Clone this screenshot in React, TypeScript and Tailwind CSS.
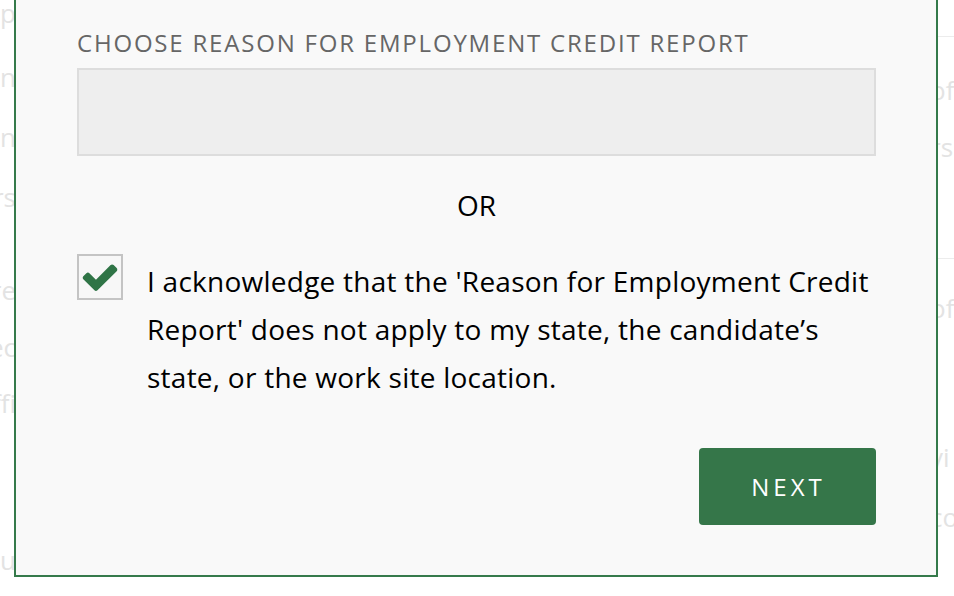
const faint = "text-[26px] leading-[30px] text-[#e3e3e3] whitespace-nowrap";

function CheckIcon() {
  return (
    <svg viewBox="0 0 1792 1792" className="w-[40px] h-[40px]" fill="#2f7446">
      <path d="M1671 566q0 40-28 68l-724 724-136 136q-28 28-68 28t-68-28l-136-136-362-362q-28-28-28-68t28-68l136-136q28-28 68-28t68 28l294 295 656-657q28-28 68-28t68 28l136 136q28 28 28 68z" />
    </svg>
  );
}

function Background() {
  return (
    <div className="flex h-[596px] bg-white overflow-hidden" style={{ fontFamily: '"Open Sans", sans-serif' }}>
      <div className="w-[16px] overflow-hidden flex flex-col items-end">
        <div className={`${faint} mt-[-2px]`}>Inp</div>
        <div className={`${faint} mt-[34px]`}>Main</div>
        <div className={`${faint} mt-[30px]`}>Plan</div>
        <div className={`${faint} mt-[30px]`}>Users</div>
        <div className={`${faint} mt-[63px]`}>Share</div>
        <div className={`${faint} mt-[27px]`}>Rec</div>
        <div className={`${faint} mt-[26px]`}>Offi</div>
        <div className={`${faint} mt-[127px]`}>Adju</div>
      </div>
      <div className="flex-1" />
      <div className="w-[24px] overflow-hidden">
        <div className="h-[36px]" />
        <div className="border-t border-[#ececec]" />
        <div className={`${faint} mt-[38px]`}>of</div>
        <div className={`${faint} mt-[27px]`}>rs</div>
        <div className="mt-[96px] border-t border-[#ececec]" />
        <div className={`${faint} mt-[34px]`}>of</div>
        <div className={`${faint} mt-[119px]`}>vi</div>
        <div className={`${faint} mt-[30px]`}>co</div>
      </div>
    </div>
  );
}

export default function App() {
  return (
    <div className="relative w-[954px] h-[596px] overflow-hidden">
      <Background />
      <div
        className="absolute left-[14px] top-[-40px] w-[924px] border-2 border-[#357a4b] bg-[#f9f9f9] pt-[65px] pb-[50px] pl-[61px] pr-[60px]"
        style={{ fontFamily: '"Open Sans", sans-serif' }}
      >
        <div className="text-[24px] leading-[32px] text-[#666666] tracking-[1.8px] uppercase whitespace-nowrap">
          Choose reason for employment credit report
        </div>
        <div className="mt-[9px] h-[88px] bg-[#eeeeee] border-2 border-[#dddddd]" />
        <div className="mt-[25px] text-center text-[28px] leading-[48px] text-black">OR</div>
        <div className="mt-[25px] flex items-start gap-[24px]">
          <div className="w-[46px] h-[46px] shrink-0 border-2 border-[#c4c4c4] bg-[#f7f7f7] flex items-center justify-center">
            <CheckIcon />
          </div>
          <p className="mt-[3px] text-[28px] leading-[48px] tracking-[0.25px] text-black whitespace-nowrap">
            I acknowledge that the 'Reason for Employment Credit
            <br />
            Report' does not apply to my state, the candidate’s
            <br />
            state, or the work site location.
          </p>
        </div>
        <div className="mt-[47px] flex justify-end">
          <button className="w-[177px] h-[77px] rounded-[4px] bg-[#357649] text-white text-[24px] tracking-[4px] pl-[2px]">
            NEXT
          </button>
        </div>
      </div>
    </div>
  );
}
